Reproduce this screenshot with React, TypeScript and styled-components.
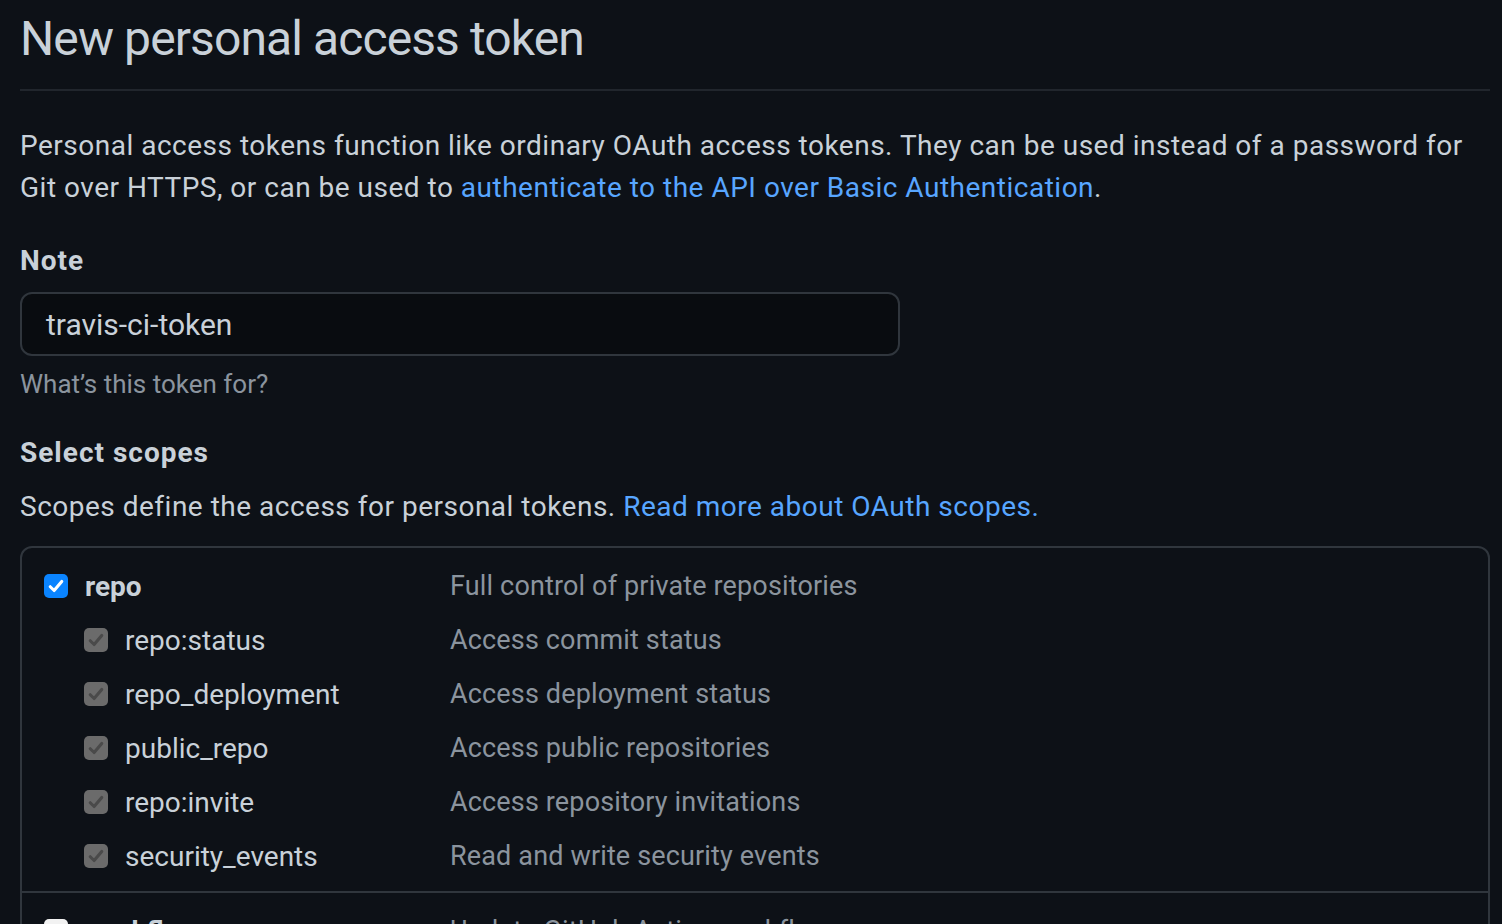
import React from "react";
import styled, { createGlobalStyle } from "styled-components";

const Global = createGlobalStyle`
  html, body { margin: 0; padding: 0; background: #0d1117; }
  body {
    font-family: Roboto, "Noto Sans", "Liberation Sans", sans-serif;
    color: #c9d1d9;
    -webkit-font-smoothing: antialiased;
  }
`;

const Page = styled.div`
  padding: 0 12px 0 20px;
  height: 924px;
  overflow: hidden;
`;

const Subhead = styled.div`
  padding-top: 9px;
  padding-bottom: 20px;
  border-bottom: 2px solid #21262d;
  margin-bottom: 34px;
`;

const Title = styled.h1`
  margin: 0;
  font-size: 48px;
  font-weight: 400;
  line-height: 60px;
  letter-spacing: -0.9px;
  color: #c9d1d9;
`;

const Paragraph = styled.p<{ $tight?: boolean }>`
  margin: ${(p) => (p.$tight ? "12px 0 0" : "0 0 31px")};
  font-size: 28px;
  line-height: 42px;
  letter-spacing: 0.5px;
`;

const Link = styled.a`
  color: #58a6ff;
  text-decoration: none;
`;

const Label = styled.div`
  font-size: 28px;
  font-weight: 700;
  line-height: 42px;
  letter-spacing: 1px;
`;

const Input = styled.div`
  box-sizing: border-box;
  width: 880px;
  height: 64px;
  margin-top: 10px;
  padding: 0 24px;
  display: flex;
  align-items: center;
  background: #090c10;
  border: 2px solid #30363d;
  border-radius: 12px;
  font-size: 30px;
  color: #c9d1d9;
`;

const Hint = styled.div`
  margin: 10px 0 30px;
  font-size: 26px;
  line-height: 36px;
  color: #8b949e;
`;

const ScopeBox = styled.div`
  margin-top: 18px;
  border: 2px solid #30363d;
  border-radius: 12px;
`;

const Group = styled.div<{ $last?: boolean }>`
  padding: 11px 0 8px 22px;
  border-bottom: ${(p) => (p.$last ? "none" : "2px solid #30363d")};
`;

const Row = styled.div`
  display: grid;
  grid-template-columns: 406px 1fr;
  align-items: center;
  height: 54px;
`;

const Name = styled.div<{ $nested?: boolean }>`
  display: flex;
  align-items: center;
  gap: 17px;
  padding-left: ${(p) => (p.$nested ? "40px" : "0")};
  font-size: 28px;
  font-weight: ${(p) => (p.$nested ? 400 : 700)};
  color: #c9d1d9;
`;

const Desc = styled.div`
  font-size: 27px;
  letter-spacing: 0.15px;
  color: #8b949e;
`;

type Kind = "checked" | "disabled" | "empty";

const Box = styled.span<{ $kind: Kind }>`
  box-sizing: border-box;
  width: 24px;
  height: 24px;
  flex: none;
  border-radius: 5px;
  display: flex;
  align-items: center;
  justify-content: center;
  background: ${(p) =>
    p.$kind === "checked" ? "#0a84ff" : p.$kind === "disabled" ? "#6b6b6b" : "#f2f2f2"};
`;

const Check = ({ kind }: { kind: Kind }) => (
  <Box $kind={kind}>
    {kind !== "empty" && (
      <svg width="20" height="20" viewBox="0 0 16 16">
        <path
          d="M3.4 8.6 L6.5 11.6 L12.6 4.4"
          fill="none"
          stroke={kind === "checked" ? "#ffffff" : "#4a4a4a"}
          strokeWidth="2.5"
          strokeLinecap="round"
          strokeLinejoin="round"
        />
      </svg>
    )}
  </Box>
);

const repoScopes: [string, string][] = [
  ["repo:status", "Access commit status"],
  ["repo_deployment", "Access deployment status"],
  ["public_repo", "Access public repositories"],
  ["repo:invite", "Access repository invitations"],
  ["security_events", "Read and write security events"],
];

export default function App() {
  return (
    <>
      <Global />
      <Page>
        <Subhead>
          <Title>New personal access token</Title>
        </Subhead>
        <Paragraph>
          Personal access tokens function like ordinary OAuth access tokens. They can be used instead of a password for
          <br />
          Git over HTTPS, or can be used to <Link href="#">authenticate to the API over Basic Authentication</Link>.
        </Paragraph>
        <Label>Note</Label>
        <Input>travis-ci-token</Input>
        <Hint>What’s this token for?</Hint>
        <Label>Select scopes</Label>
        <Paragraph $tight>
          Scopes define the access for personal tokens. <Link href="#">Read more about OAuth scopes.</Link>
        </Paragraph>
        <ScopeBox>
          <Group>
            <Row>
              <Name>
                <Check kind="checked" />
                repo
              </Name>
              <Desc>Full control of private repositories</Desc>
            </Row>
            {repoScopes.map(([n, d]) => (
              <Row key={n}>
                <Name $nested>
                  <Check kind="disabled" />
                  {n}
                </Name>
                <Desc>{d}</Desc>
              </Row>
            ))}
          </Group>
          <Group $last>
            <Row>
              <Name>
                <Check kind="empty" />
                workflow
              </Name>
              <Desc>Update GitHub Action workflows</Desc>
            </Row>
          </Group>
        </ScopeBox>
      </Page>
    </>
  );
}
